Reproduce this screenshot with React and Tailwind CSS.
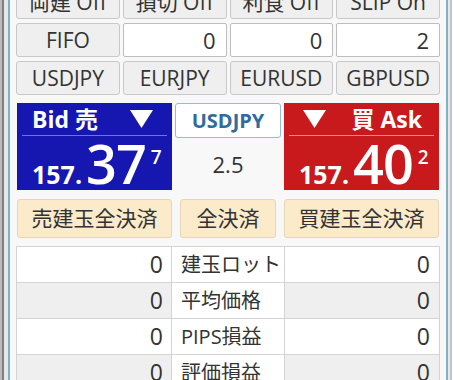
import React from "react";

const F = "font-['Open_Sans','Noto_Sans_CJK_JP',sans-serif]";

function Btn({ children }) {
  return (
    <div className="h-[34px] flex items-center justify-center rounded-[3px] border border-[#c8c8c8] bg-[#efefef] text-[21px] text-[#333] leading-none whitespace-nowrap">
      {children}
    </div>
  );
}

function Val({ children }) {
  return (
    <div className="h-[34px] flex items-center justify-end pr-[10px] rounded-[2px] border border-[#bdbdbd] bg-white text-[22px] text-[#333] leading-none">
      {children}
    </div>
  );
}

function Tri() {
  return (
    <svg width="23" height="18" viewBox="0 0 23 18">
      <polygon points="0,0 23,0 11.5,18" fill="white" />
    </svg>
  );
}

function Price({ big, small }) {
  return (
    <div className="flex items-baseline text-white">
      <span className="text-[25px] font-bold leading-none">157.</span>
      <span className="text-[54px] font-semibold leading-none ml-[4px] tracking-[-1px]">{big}</span>
      <span className="relative bottom-[20px] text-[19px] font-semibold leading-none ml-[5px]">{small}</span>
    </div>
  );
}

const rows = [
  ["0", "建玉ロット", "0", false],
  ["0", "平均価格", "0", true],
  ["0", "PIPS損益", "0", false],
  ["0", "評価損益", "0", true],
];

export default function App() {
  return (
    <div className={`w-[460px] h-[380px] overflow-hidden bg-white flex ${F}`}>
      <div className="w-[2px] bg-[#bcbcbc]" />
      <div className="w-[2px] bg-[#808080]" />
      <div className="w-[4px] bg-[#e8e8e8]" />
      <div className="w-[2px] bg-[#7fb2c6]" />
      <div className="w-[436px] bg-[#f8f8f8] pl-[6px] flex flex-col">
        <div className="grid grid-cols-4 w-[424px] gap-x-[3px] gap-y-[4px] mt-[-15px]">
          <Btn>両建 Off</Btn>
          <Btn>損切 Off</Btn>
          <Btn>利食 Off</Btn>
          <Btn>SLIP On</Btn>
          <Btn>FIFO</Btn>
          <Val>0</Val>
          <Val>0</Val>
          <Val>2</Val>
          <Btn>USDJPY</Btn>
          <Btn>EURJPY</Btn>
          <Btn>EURUSD</Btn>
          <Btn>GBPUSD</Btn>
        </div>

        <div className="grid grid-cols-[155px_106px_155px] gap-x-[3px] ml-[1px] mt-[8px]">
          <div className="h-[87px] bg-[#1616b0] flex flex-col">
            <div className="h-[35px] flex items-center justify-between pl-[15px] pr-[19px] text-white">
              <span className="text-[23px] font-bold leading-none whitespace-nowrap">Bid 売</span>
              <Tri />
            </div>
            <div className="mx-[5px] h-[1px] bg-[#6f6ff0]" />
            <div className="pl-[15px]">
              <Price big="37" small="7" />
            </div>
          </div>

          <div className="h-[87px] flex flex-col">
            <div className="h-[35px] flex items-center justify-center rounded-[3px] border border-[#97bccd] bg-white text-[20px] font-bold text-[#2f6c9c] leading-none">
              USDJPY
            </div>
            <div className="flex-1 flex items-center justify-center text-[22px] text-[#333] leading-none">
              2.5
            </div>
          </div>

          <div className="h-[87px] bg-[#c8191c] flex flex-col">
            <div className="h-[35px] flex items-center justify-between pl-[19px] pr-[17px] text-white">
              <Tri />
              <span className="text-[23px] font-bold leading-none whitespace-nowrap">買 Ask</span>
            </div>
            <div className="mx-[5px] h-[1px] bg-[#ec8a8a]" />
            <div className="pl-[15px]">
              <Price big="40" small="2" />
            </div>
          </div>
        </div>

        <div className="grid grid-cols-[155px_106px_155px] gap-x-[3px] ml-[1px] mt-[9px]">
          <div className="h-[39px] flex items-center justify-center rounded-[3px] border border-[#e8d6b3] bg-[#fcebca] text-[21px] text-[#333] leading-none whitespace-nowrap">
            売建玉全決済
          </div>
          <div className="h-[39px] mx-[5px] flex items-center justify-center rounded-[3px] border border-[#e8d6b3] bg-[#fcebca] text-[21px] text-[#333] leading-none whitespace-nowrap">
            全決済
          </div>
          <div className="h-[39px] flex items-center justify-center rounded-[3px] border border-[#e8d6b3] bg-[#fcebca] text-[21px] text-[#333] leading-none whitespace-nowrap">
            買建玉全決済
          </div>
        </div>

        <div className="mt-[8px] w-[424px] grid grid-cols-[154px_112px_154px] gap-px p-px bg-[#d4d4d4]">
          {rows.map(([a, label, b, gray], i) => (
            <React.Fragment key={i}>
              <div className={`h-[35px] flex items-center justify-end pr-[8px] text-[23px] text-[#333] leading-none ${gray ? "bg-[#efefef]" : "bg-white"}`}>
                {a}
              </div>
              <div className="h-[35px] flex items-center pl-[9px] text-[20px] text-[#333] leading-none bg-white whitespace-nowrap overflow-hidden">
                {label}
              </div>
              <div className={`h-[35px] flex items-center justify-end pr-[9px] text-[23px] text-[#333] leading-none ${gray ? "bg-[#efefef]" : "bg-white"}`}>
                {b}
              </div>
            </React.Fragment>
          ))}
        </div>
      </div>
      <div className="w-[2px] bg-[#7fb2c6]" />
      <div className="w-[2px] bg-[#e8e8e8]" />
      <div className="w-[2px] bg-[#c4c4c4]" />
      <div className="flex-1 bg-white" />
    </div>
  );
}
